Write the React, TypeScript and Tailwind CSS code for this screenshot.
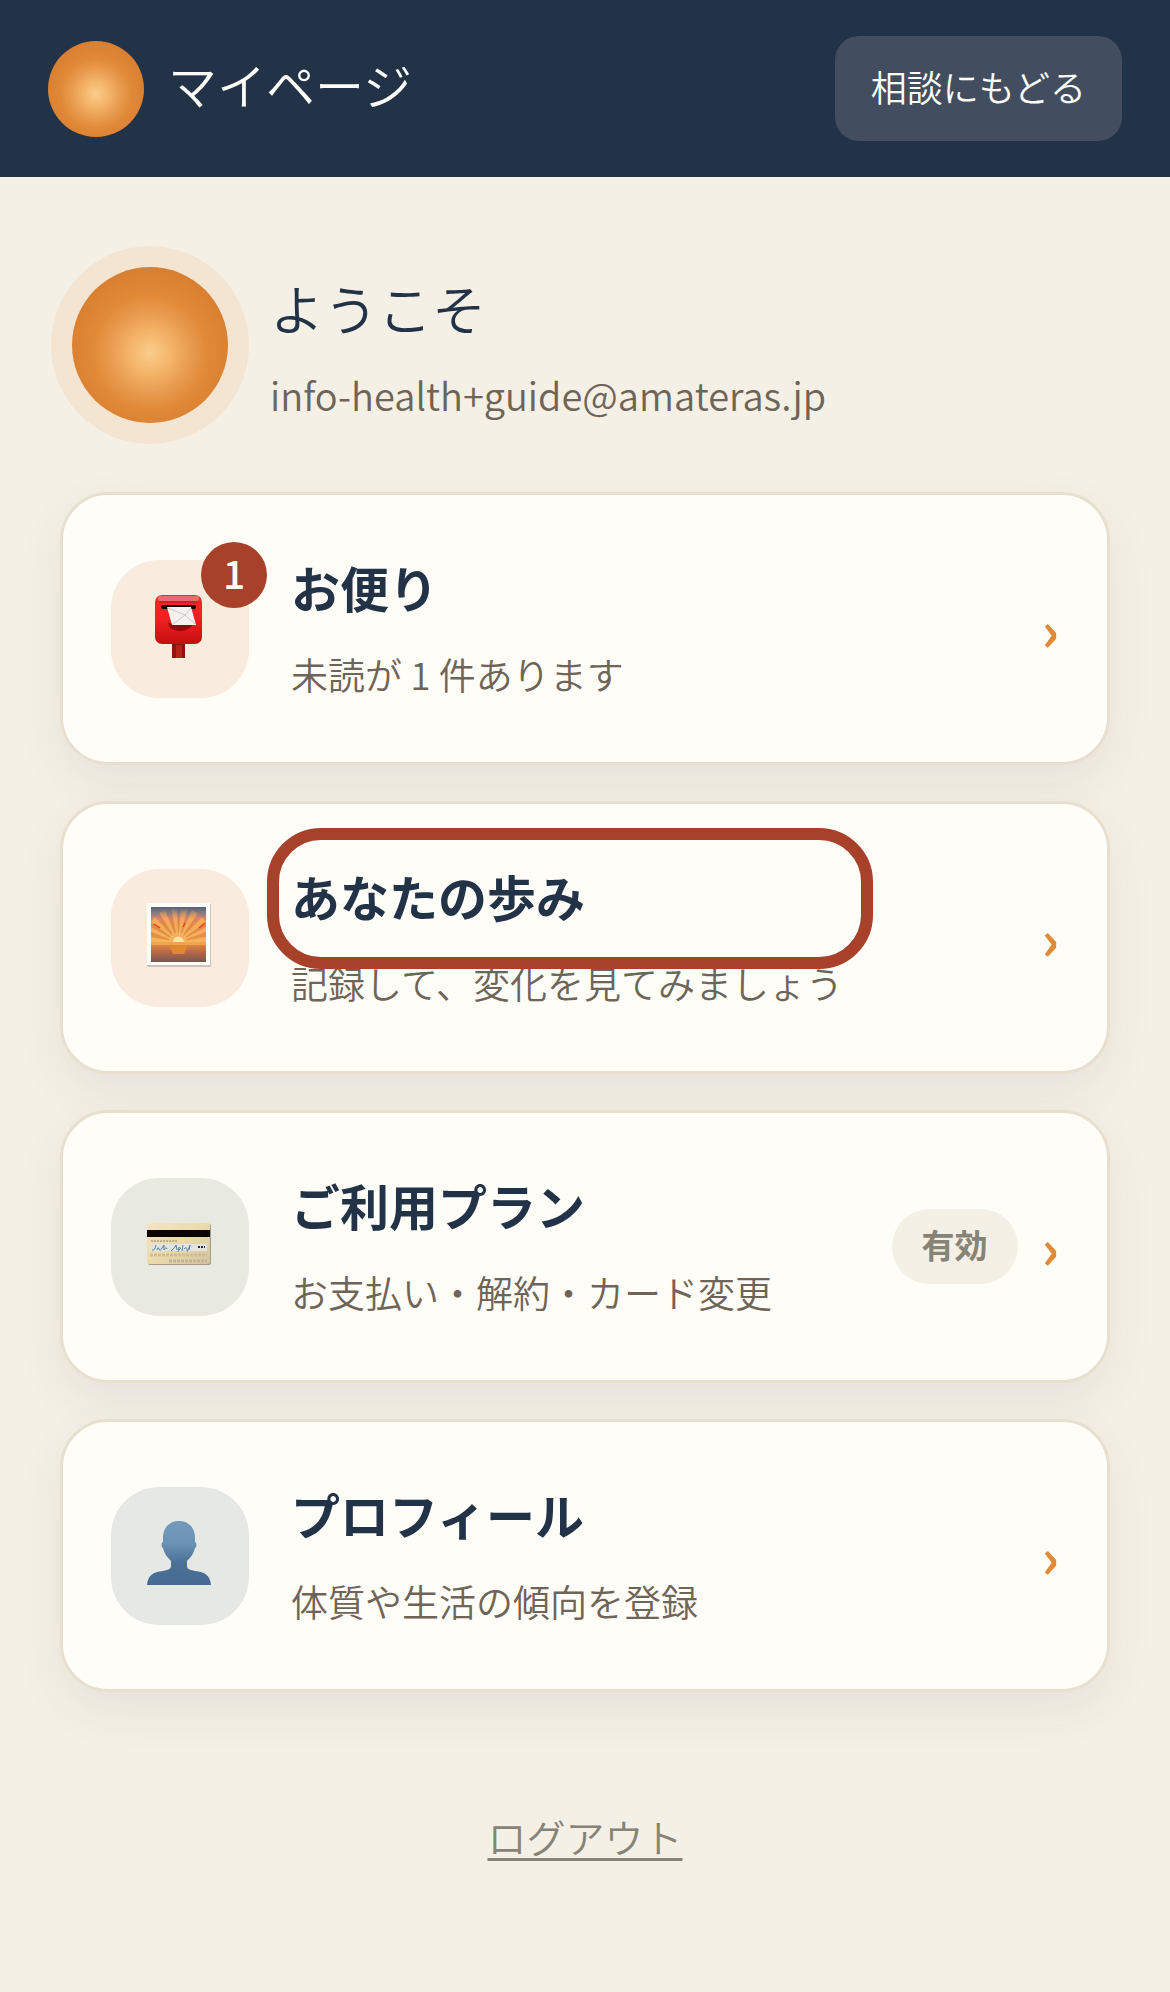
import type { ReactNode } from 'react'

interface MenuItem {
  href: string
  title: string
  description: string
  icon: ReactNode
  tile: string
  unread?: number
  status?: string
  highlighted?: boolean
}

function PostboxIcon() {
  return (
    <svg viewBox="0 0 64 64" className="size-16" aria-hidden="true">
      <defs>
        <linearGradient id="postbox" x1="0" y1="0" x2="0" y2="1">
          <stop offset="0" stopColor="#f32a28" />
          <stop offset="0.5" stopColor="#ee2020" />
          <stop offset="1" stopColor="#c40f10" />
        </linearGradient>
      </defs>
      <rect x="25" y="48" width="13" height="16" fill="#8e1411" />
      <rect x="29" y="51" width="6" height="13" fill="#b5221b" />
      <rect x="8" y="1" width="47" height="49" rx="7" fill="url(#postbox)" />
      <rect x="11" y="2" width="41" height="5" rx="2" fill="#e0706a" />
      <path d="M12 8h39" stroke="#b81514" strokeWidth="1" />
      <path d="M21 29q2 8 11 8t14-6z" fill="#8c0c0c" />
      <rect x="14" y="11" width="35" height="4" rx="2" fill="#140404" />
      <path d="M20 13h24l5 18H25z" fill="#f4f2ee" />
      <path d="M21 14l17 7 6-7M25 31l13-10 10 9" fill="none" stroke="#cbc7c2" strokeWidth="1" />
    </svg>
  )
}

function SunriseIcon() {
  return (
    <svg viewBox="0 0 64 64" className="size-16" aria-hidden="true">
      <defs>
        <linearGradient id="sunriseSky" x1="0" y1="0" x2="0" y2="1">
          <stop offset="0" stopColor="#56617c" />
          <stop offset="0.18" stopColor="#8d7f7c" />
          <stop offset="0.3" stopColor="#df7f6c" />
          <stop offset="0.45" stopColor="#e08a48" />
          <stop offset="1" stopColor="#e8963f" />
        </linearGradient>
        <linearGradient id="sunriseRay" x1="0" y1="0" x2="0" y2="1">
          <stop offset="0" stopColor="#f0a25a" stopOpacity="0" />
          <stop offset="0.35" stopColor="#f3a956" />
          <stop offset="1" stopColor="#f6b45a" />
        </linearGradient>
        <linearGradient id="sunriseSea" x1="0" y1="0" x2="0" y2="1">
          <stop offset="0" stopColor="#d98545" />
          <stop offset="0.45" stopColor="#b5654a" />
          <stop offset="1" stopColor="#75584f" />
        </linearGradient>
      </defs>
      <rect x="0" y="1" width="64" height="63" fill="#c9c4bc" />
      <rect x="0" y="0" width="63" height="62" fill="#fffdf8" />
      <rect x="4" y="4" width="55" height="38" fill="url(#sunriseSky)" />
      <path
        d="M31 39L24 5h6zM31 39L34 5h7zM31 39L45 7l6 3zM31 39L55 14l4 5zM31 39l28-15v5zM31 39l28-5v5zM31 39L12 10l6-3zM31 39L4 19l4-5zM31 39L4 29v-5zM31 39H4v-5z"
        fill="url(#sunriseRay)"
      />
      <path d="M7 21l6 4M36 24l2-4M52 25l6-5" stroke="#e0382a" strokeWidth="1.2" />
      <circle cx="31" cy="38" r="9" fill="#f8c06a" opacity="0.5" />
      <path d="M26 39a5 5 0 0 1 11 0z" fill="#f8e4a8" />
      <rect x="4" y="39" width="55" height="3" fill="#f0a54c" />
      <rect x="4" y="42" width="55" height="17" fill="url(#sunriseSea)" />
      <path d="M22 42h19l-4 9H26z" fill="#e08732" />
    </svg>
  )
}

function CardIcon() {
  return (
    <svg viewBox="0 0 64 42" className="h-[42px] w-16" aria-hidden="true">
      <defs>
        <linearGradient id="cardFace" x1="0" y1="0" x2="1" y2="1">
          <stop offset="0" stopColor="#f5e3c4" />
          <stop offset="0.5" stopColor="#ebdbab" />
          <stop offset="1" stopColor="#d3c3a2" />
        </linearGradient>
      </defs>
      <rect x="1" y="1" width="63" height="41" rx="2" fill="#a39c8c" />
      <rect x="0" y="0" width="63" height="41" rx="2" fill="url(#cardFace)" />
      <rect x="0" y="7" width="63" height="7" fill="#0b0606" />
      <path d="M4 18h26" stroke="#857d70" strokeWidth="1" strokeDasharray="2 1" />
      <rect x="3" y="21" width="57" height="7" fill="#e3e3df" />
      <path
        d="M5 27q3 1 4-5M10 27q1-4 2-1t3-1l2-3v5q2-4 3-1M24 28q4-3 5-6l1 5M31 29l1-5q3 1 0 3M35 28l1-6M37 26q3-3 3 1t3-5l-1 5"
        fill="none"
        stroke="#5381b4"
        strokeWidth="1"
      />
      <path d="M51 24h7" stroke="#2d2929" strokeWidth="2" strokeDasharray="2 1" />
      <path d="M3 32h57" stroke="#cdbd97" strokeWidth="3" strokeDasharray="3 1" />
      <path d="M22 38h38" stroke="#c4b493" strokeWidth="3" strokeDasharray="3 1" />
    </svg>
  )
}

function PersonIcon() {
  return (
    <svg viewBox="0 0 64 64" className="size-16" aria-hidden="true">
      <defs>
        <linearGradient id="person" x1="0" y1="0" x2="0" y2="1">
          <stop offset="0" stopColor="#739aba" />
          <stop offset="0.35" stopColor="#6a93b6" />
          <stop offset="0.65" stopColor="#4c7196" />
          <stop offset="1" stopColor="#466a90" />
        </linearGradient>
      </defs>
      <path
        d="M32 0c10 0 16 7 16 17v4c2 0 2 5 0 6-1 5-4 9-8 13v5c0 3 3 4 8 5 10 1 15 4 16 14H0c1-10 6-13 16-14 5-1 8-2 8-5v-5c-4-4-7-8-8-13-2-1-2-6 0-6v-4C16 7 22 0 32 0z"
        fill="url(#person)"
      />
    </svg>
  )
}

const MENU: MenuItem[] = [
  {
    href: '#letters',
    title: 'お便り',
    description: '未読が 1 件あります',
    icon: <PostboxIcon />,
    tile: 'bg-[#f9ebdd]',
    unread: 1,
  },
  {
    href: '#progress',
    title: 'あなたの歩み',
    description: '記録して、変化を見てみましょう',
    icon: <SunriseIcon />,
    tile: 'bg-[#f9ebdd]',
    highlighted: true,
  },
  {
    href: '#plan',
    title: 'ご利用プラン',
    description: 'お支払い・解約・カード変更',
    icon: <CardIcon />,
    tile: 'bg-[#e8e9e0]',
    status: '有効',
  },
  {
    href: '#profile',
    title: 'プロフィール',
    description: '体質や生活の傾向を登録',
    icon: <PersonIcon />,
    tile: 'bg-[#e6e8e4]',
  },
]

function Orb({ className }: { className: string }) {
  return (
    <div
      className={`shrink-0 rounded-full bg-[radial-gradient(circle_at_50%_55%,#f9cd8c_0%,#f4b469_18%,#e99c50_34%,#e08937_50%,#d97f31_72%)] ${className}`}
    />
  )
}

function MenuCard({ item }: { item: MenuItem }) {
  return (
    <a
      href={item.href}
      className="flex items-center rounded-[48px] border-3 border-[#e7dfd0] bg-[#fffdf8] px-12 py-[46px] shadow-[0_18px_48px_rgba(50,60,50,0.07)]"
    >
      <div className={`relative flex size-[138px] shrink-0 items-center justify-center rounded-[48px] pr-0.5 pb-1.5 ${item.tile}`}>
        {item.icon}
        {item.unread && (
          <span className="absolute -top-[18px] -right-[18px] flex size-[66px] items-center justify-center rounded-full bg-[#a7412a] pb-1 text-[39px] leading-none font-medium text-[#fffdf8]">
            {item.unread}
          </span>
        )}
      </div>

      <div className="ml-[42px] min-w-0 flex-1">
        <div className="relative">
          <h2 className="text-[49px] leading-[91px] font-bold text-[#223247]">{item.title}</h2>
          {item.highlighted && (
            <span className="absolute -top-[22px] -bottom-7 -left-6 w-[606px] rounded-[54px] border-12 border-[#a7412a]" />
          )}
        </div>
        <p className="text-[37px] leading-[84px] font-[350] text-[#6e6457]">{item.description}</p>
      </div>

      {item.status && (
        <span className="mr-6 rounded-full bg-[#f5f0e6] px-[30px] pb-1 text-[33px] leading-[71px] font-bold text-[#878377]">
          {item.status}
        </span>
      )}
      <span className="pb-0.5 text-[54px] leading-none font-bold text-[#e08a37]" aria-hidden="true">›</span>
    </a>
  )
}

export default function App() {
  return (
    <div className="min-h-screen bg-[#f5f0e6] font-['Noto_Sans_CJK_JP',sans-serif]">
      <header className="flex items-center justify-between bg-[#223247] px-12 py-9">
        <div className="flex items-center gap-6">
          <Orb className="size-24" />
          <h1 className="font-['Liberation_Serif','Noto_Sans_CJK_JP',serif] text-[49px] leading-[72px] font-[350] text-[#fffdf8]">
            マイページ
          </h1>
        </div>
        <button
          type="button"
          className="rounded-3xl bg-[#424e60] px-9 pb-1 text-4xl leading-[101px] font-[350] text-[#fffdf8]"
        >
          相談にもどる
        </button>
      </header>

      <main className="px-[60px] pt-[90px] pb-24">
        <section className="mb-[69px] flex h-[156px] items-center gap-[42px] px-3">
          <Orb className="size-[156px] shadow-[0_0_0_21px_#f4e5d3]" />
          <div className="min-w-0">
            <h2 className="font-['Liberation_Serif','Noto_Sans_CJK_JP',serif] text-[54px] leading-[100px] font-[350] text-[#223247]">
              ようこそ
            </h2>
            <p className="text-[38px] leading-16 font-[350] text-[#6e6457]">info-health+guide@amateras.jp</p>
          </div>
        </section>

        <nav className="flex flex-col gap-9">
          {MENU.map(item => (
            <MenuCard key={item.href} item={item} />
          ))}
        </nav>

        <div className="mt-[108px] flex justify-center">
          <button
            type="button"
            className="text-[39px] leading-[72px] font-[350] text-[#878377] underline decoration-3 underline-offset-5"
          >
            ログアウト
          </button>
        </div>
      </main>
    </div>
  )
}
